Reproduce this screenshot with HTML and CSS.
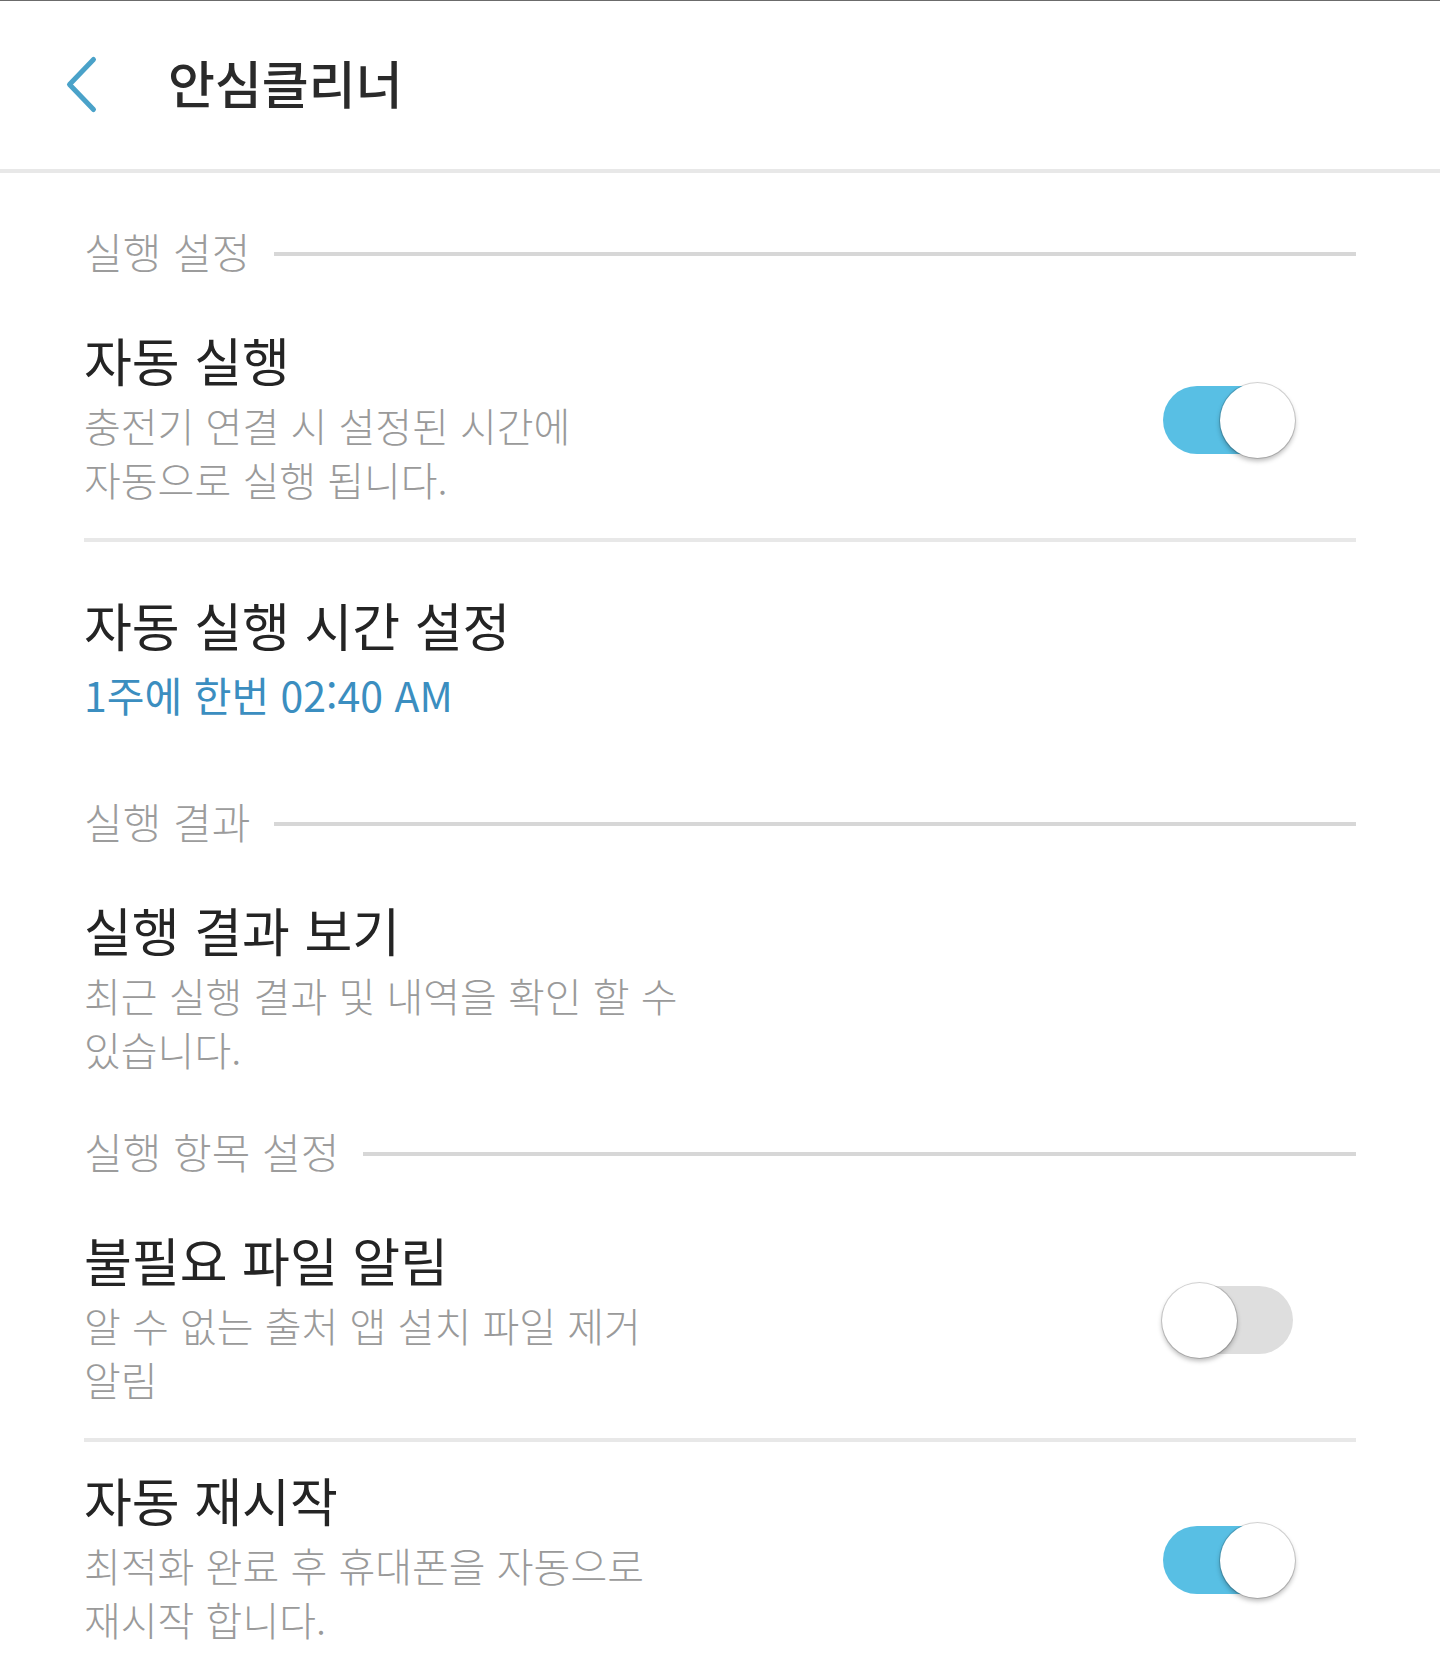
FILE: index.html
```html
<!DOCTYPE html>
<html lang="ko">
<head>
  <meta charset="UTF-8" />
  <meta name="viewport" content="width=device-width, initial-scale=1.0" />
  <title>안심클리너</title>
  <link rel="stylesheet" href="styles.css">
</head>
<body>
  <header class="app-bar">
    <svg class="back-icon" width="40" height="64" viewBox="0 0 40 64">
      <path d="M29.5 6.5 L5.5 31.5 L29.5 56.5" fill="none" stroke="#4aa2c9" stroke-width="5" stroke-linecap="round" stroke-linejoin="round" />
    </svg>
    <h1 class="app-title">안심클리너</h1>
  </header>

  <div class="settings">
    <div class="category">
      <span class="category-label">실행 설정</span>
      <span class="category-line"></span>
    </div>
    <div class="item">
      <div class="item-text">
        <div class="item-title">자동 실행</div>
        <div class="item-sub">충전기 연결 시 설정된 시간에<br>자동으로 실행 됩니다.</div>
      </div>
      <span class="switch on"><span class="knob"></span></span>
    </div>
    <div class="item">
      <div class="item-text">
        <div class="item-title">자동 실행 시간 설정</div>
        <div class="item-value">1주에 한번 02:40 AM</div>
      </div>
    </div>

    <div class="category">
      <span class="category-label">실행 결과</span>
      <span class="category-line"></span>
    </div>
    <div class="item">
      <div class="item-text">
        <div class="item-title">실행 결과 보기</div>
        <div class="item-sub">최근 실행 결과 및 내역을 확인 할 수<br>있습니다.</div>
      </div>
    </div>

    <div class="category">
      <span class="category-label">실행 항목 설정</span>
      <span class="category-line"></span>
    </div>
    <div class="item">
      <div class="item-text">
        <div class="item-title">불필요 파일 알림</div>
        <div class="item-sub">알 수 없는 출처 앱 설치 파일 제거<br>알림</div>
      </div>
      <span class="switch"><span class="knob"></span></span>
    </div>
    <div class="item">
      <div class="item-text">
        <div class="item-title">자동 재시작</div>
        <div class="item-sub">최적화 완료 후 휴대폰을 자동으로<br>재시작 합니다.</div>
      </div>
      <span class="switch on"><span class="knob"></span></span>
    </div>
  </div>
</body>
</html>
```

FILE: styles.css
```css
body {
  margin: 0;
  font-family: "Noto Sans CJK KR", "Noto Sans", sans-serif;
  background-color: #fff;
  color: #262626;
}

.app-bar {
  display: flex;
  align-items: center;
  height: 168px;
  border-top: 1px solid #6b6b6b;
  border-bottom: 4px solid #e8e8e8;
}

.back-icon {
  margin-left: 64px;
}

.app-title {
  margin: 0 0 7px 64px;
  font-size: 51px;
  font-weight: 500;
  line-height: 60px;
  color: #2a2a2a;
}

.settings {
  padding-top: 35px;
}

.category {
  display: flex;
  align-items: center;
  margin: 0 84px;
  padding: 18px 0 26px;
}

.category-label {
  font-size: 42px;
  font-weight: 300;
  line-height: 50px;
  color: #9c9c9c;
}

.category-line {
  flex: 1;
  height: 4px;
  margin: 6px 0 0 24px;
  background-color: #d7d7d7;
}

.item {
  display: flex;
  align-items: center;
  min-height: 236px;
  margin: 0 84px;
}

.item + .item {
  border-top: 4px solid #e8e8e8;
}

.item-text {
  flex: 1;
  margin-bottom: 4px;
}

.item-title {
  font-size: 52px;
  line-height: 60px;
  color: #242424;
}

.item-sub {
  margin-top: 8px;
  font-size: 40px;
  font-weight: 300;
  line-height: 54px;
  color: #9a9a9a;
}

.item-value {
  margin-top: 12px;
  font-size: 41px;
  line-height: 54px;
  color: #3b8ec0;
}

/* toggle */
.switch {
  display: flex;
  align-items: center;
  width: 130px;
  height: 68px;
  margin-right: 63px;
  border-radius: 34px;
  background-color: #dedede;
}

.switch.on {
  justify-content: flex-end;
  background-color: #58bfe4;
}

.knob {
  flex: none;
  width: 75px;
  height: 75px;
  margin-left: -1px;
  border-radius: 50%;
  background-color: #fff;
  box-shadow: 0 0 0 1px rgba(0, 0, 0, 0.16), 0 3px 5px rgba(0, 0, 0, 0.28);
}

.switch.on .knob {
  margin: 0 -2px 0 0;
}
```
